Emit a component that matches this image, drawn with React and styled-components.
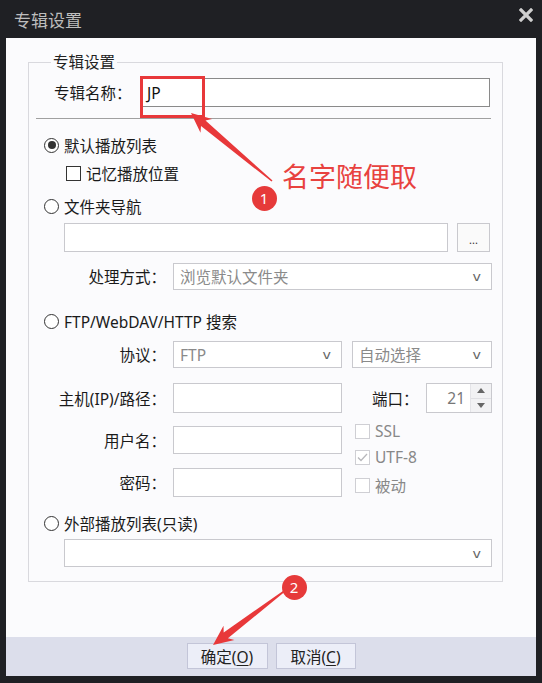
import React from "react";
import styled, { createGlobalStyle } from "styled-components";

const GlobalStyle = createGlobalStyle`
  html, body {
    margin: 0;
    padding: 0;
    background: #1f2024;
  }
  body {
    font-family: "Noto Sans", "Noto Sans CJK SC", sans-serif;
  }
`;

const Window = styled.div`
  position: relative;
  width: 542px;
  height: 683px;
  background: #1f2024;
  display: flex;
  flex-direction: column;
  overflow: hidden;
`;

const TitleBar = styled.div`
  height: 38px;
  flex: none;
  display: flex;
  align-items: center;
  justify-content: space-between;
  padding: 0 9px 0 14px;
  color: #bdbdbd;
  font-size: 17px;
`;

const CloseButton = styled.div`
  width: 14px;
  height: 14px;
  margin-top: -8px;
  display: flex;
`;

const Body = styled.div`
  flex: 1;
  margin: 0 6px 7px;
  display: flex;
  flex-direction: column;
  background: #fbfbfd;
`;

const Content = styled.div`
  flex: 1;
  padding: 14px 33px 0 22px;
`;

const GroupBox = styled.fieldset`
  margin: 0;
  padding: 0 10px 14px 15px;
  border: 1px solid #d9d9de;
  min-width: 0;
`;

const Legend = styled.legend`
  margin-left: 7px;
  padding: 0 2px;
  font-size: 15.5px;
  line-height: 20px;
  color: #222;
`;

const Row = styled.div`
  display: flex;
  align-items: center;
  height: ${({ h }) => h || 22}px;
  margin-top: ${({ mt }) => mt || 0}px;
  margin-left: ${({ ml }) => ml || 0}px;
  font-size: 15.5px;
  color: #1a1a1a;
`;

const Separator = styled.div`
  height: 1px;
  background: #a0a0a0;
  margin: 11px 1px 0 -8px;
`;

const Radio = styled.span`
  width: 15px;
  height: 15px;
  box-sizing: border-box;
  border: 1.4px solid #333;
  border-radius: 50%;
  margin-right: 5px;
  display: flex;
  align-items: center;
  justify-content: center;
  background: #fff;
  &::after {
    content: "";
    width: 8px;
    height: 8px;
    border-radius: 50%;
    background: ${({ checked }) => (checked ? "#333" : "transparent")};
  }
`;

const Check = styled.span`
  width: 15px;
  height: 15px;
  box-sizing: border-box;
  border: 1.3px solid ${({ disabled }) => (disabled ? "#cfcfd4" : "#333")};
  background: #fff;
  margin-right: 5px;
  display: flex;
  align-items: center;
  justify-content: center;
`;

const Label = styled.span`
  width: ${({ w }) => w || 122}px;
  flex: none;
  text-align: ${({ left }) => (left ? "left" : "right")};
  margin-right: ${({ gap }) => (gap === undefined ? 7 : gap)}px;
  white-space: nowrap;
  color: ${({ dim }) => (dim ? "#888" : "#1a1a1a")};
`;

const Field = styled.div`
  box-sizing: border-box;
  height: 100%;
  width: ${({ w }) => (w ? `${w}px` : "auto")};
  flex: ${({ w }) => (w ? "none" : 1)};
  margin-left: ${({ ml }) => ml || 0}px;
  border: 1px solid ${({ dark }) => (dark ? "#8a8a8a" : "#c9c9ce")};
  background: #fff;
  display: flex;
  align-items: center;
  padding: 0 6px;
  color: ${({ dark }) => (dark ? "#111" : "#8a8a8a")};
  font-size: 15.5px;
`;

const Chevron = styled.span`
  margin-left: auto;
  margin-right: 4px;
  font-size: 13px;
  color: #666;
  font-family: "DejaVu Sans", sans-serif;
  transform: scaleX(1.1);
`;

const DotsButton = styled.div`
  box-sizing: border-box;
  width: 33px;
  height: 100%;
  margin-left: 9px;
  margin-right: 2px;
  border: 1px solid #c9c9ce;
  background: #fafafa;
  display: flex;
  align-items: center;
  justify-content: center;
  font-size: 11px;
  color: #333;
  padding-top: 4px;
`;

const PortLabel = styled.span`
  margin-left: 30px;
  white-space: nowrap;
`;

const Spin = styled.div`
  box-sizing: border-box;
  width: 66px;
  height: 100%;
  margin-left: auto;
  border: 1px solid #c9c9ce;
  background: #fff;
  display: flex;
  align-items: center;
`;

const SpinValue = styled.span`
  flex: 1;
  text-align: right;
  padding-right: 5px;
  color: #777;
  font-size: 15.5px;
`;

const SpinButtons = styled.div`
  width: 20px;
  height: 100%;
  display: flex;
  flex-direction: column;
  border-left: 1px solid #e4e4e8;
`;

const SpinHalf = styled.div`
  flex: 1;
  background: #f2f2f4;
  display: flex;
  align-items: center;
  justify-content: center;
  border-bottom: ${({ top }) => (top ? "1px solid #e0e0e4" : "none")};
`;

const Split = styled.div`
  display: flex;
  margin-top: 13px;
`;

const Column = styled.div`
  display: flex;
  flex-direction: column;
  width: ${({ w }) => (w ? `${w}px` : "auto")};
  margin-left: ${({ ml }) => ml || 0}px;
  margin-top: ${({ mt }) => mt || 0}px;
`;

const Footer = styled.div`
  height: 39px;
  flex: none;
  background: #dcdeeb;
  display: flex;
  justify-content: center;
  align-items: center;
  gap: 8px;
  padding-bottom: 4px;
  box-sizing: border-box;
`;

const Button = styled.button`
  width: ${({ w }) => w}px;
  height: 26px;
  margin-top: 3px;
  border: 1px solid #c3c5d8;
  background: #eceef8;
  font-family: inherit;
  font-size: 15.5px;
  color: #222;
  padding: 0;
  u {
    text-underline-offset: 2px;
  }
`;

const Overlay = styled.svg`
  position: absolute;
  left: 0;
  top: 0;
  pointer-events: none;
`;

const Badge = styled.div`
  position: absolute;
  left: ${({ x }) => x - 12.5}px;
  top: ${({ y }) => y - 12.5}px;
  width: 25px;
  height: 25px;
  border-radius: 50%;
  background: #e63a3a;
  color: #fff;
  font-size: 15px;
  display: flex;
  align-items: center;
  justify-content: center;
  font-family: "Noto Sans", sans-serif;
`;

const Note = styled.div`
  position: absolute;
  left: 282px;
  top: 160px;
  font-size: 27px;
  line-height: 34px;
  color: #e8423f;
  letter-spacing: 0px;
`;

const Arrow = ({ size }) => (
  <svg width="8" height="5" viewBox="0 0 8 5">
    <path d={size === "up" ? "M0 5 L4 0 L8 5 Z" : "M0 0 L4 5 L8 0 Z"} fill="#666" />
  </svg>
);

const Tick = () => (
  <svg width="11" height="9" viewBox="0 0 11 9">
    <path d="M1 4.5 L4 7.5 L10 1" stroke="#b8b8bc" strokeWidth="1.3" fill="none" />
  </svg>
);

function App() {
  return (
    <>
      <GlobalStyle />
      <Window>
        <TitleBar>
          专辑设置
          <CloseButton>
            <svg width="14" height="14" viewBox="0 0 14 14">
              <path d="M2 2 L12 12 M12 2 L2 12" stroke="#cfcfcf" strokeWidth="3.2" strokeLinecap="square" />
            </svg>
          </CloseButton>
        </TitleBar>
        <Body>
          <Content>
            <GroupBox>
              <Legend>专辑设置</Legend>
              <Row h={29} mt={6} ml={10}>
                <Label w={76} gap={10} left>专辑名称：</Label>
                <Field dark ml={0} style={{ marginRight: 2 }}>JP</Field>
              </Row>
              <Separator />
              <Row mt={15}>
                <Radio checked />
                默认播放列表
              </Row>
              <Row mt={6} ml={22}>
                <Check />
                记忆播放位置
              </Row>
              <Row mt={11}>
                <Radio />
                文件夹导航
              </Row>
              <Row h={29} mt={6} ml={20}>
                <Field />
                <DotsButton>...</DotsButton>
              </Row>
              <Row h={27} mt={11}>
                <Label>处理方式：</Label>
                <Field>
                  浏览默认文件夹
                  <Chevron>v</Chevron>
                </Field>
              </Row>
              <Row mt={20}>
                <Radio />
                FTP/WebDAV/HTTP 搜索
              </Row>
              <Row h={27} mt={9}>
                <Label>协议：</Label>
                <Field w={169}>
                  FTP
                  <Chevron>v</Chevron>
                </Field>
                <Field ml={10}>
                  自动选择
                  <Chevron>v</Chevron>
                </Field>
              </Row>
              <Row h={30} mt={15}>
                <Label>主机(IP)/路径：</Label>
                <Field w={169} />
                <PortLabel>端口：</PortLabel>
                <Spin>
                  <SpinValue>21</SpinValue>
                  <SpinButtons>
                    <SpinHalf top>
                      <Arrow size="up" />
                    </SpinHalf>
                    <SpinHalf>
                      <Arrow size="down" />
                    </SpinHalf>
                  </SpinButtons>
                </Spin>
              </Row>
              <Split>
                <Column>
                  <Row h={28}>
                    <Label>用户名：</Label>
                    <Field w={169} />
                  </Row>
                  <Row h={29} mt={14}>
                    <Label>密码：</Label>
                    <Field w={169} />
                  </Row>
                </Column>
                <Column ml={13} mt={-8}>
                  <Row h={26}>
                    <Check disabled />
                    <Label left dim w={60}>SSL</Label>
                  </Row>
                  <Row h={26} mt={0}>
                    <Check disabled>
                      <Tick />
                    </Check>
                    <Label left dim w={60}>UTF-8</Label>
                  </Row>
                  <Row h={26} mt={2}>
                    <Check disabled />
                    <Label left dim w={60}>被动</Label>
                  </Row>
                </Column>
              </Split>
              <Row mt={14}>
                <Radio />
                外部播放列表(只读)
              </Row>
              <Row h={28} mt={5} ml={20}>
                <Field>
                  <Chevron>v</Chevron>
                </Field>
              </Row>
            </GroupBox>
          </Content>
          <Footer>
            <Button w={81}>
              确定(<u>O</u>)
            </Button>
            <Button w={80}>
              取消(<u>C</u>)
            </Button>
          </Footer>
        </Body>

        <Overlay width="542" height="683" viewBox="0 0 542 683">
          <rect x="141.5" y="77.5" width="62" height="39" fill="none" stroke="#e8383a" strokeWidth="3" />
          <polygon
            points="191,113 212.1,119 205.5,120.6 272.5,180.4 271.5,181.6 201,126 200.5,132.8"
            fill="#e8383a"
          />
          <polygon
            points="213,645 234.4,640.1 227.9,638.2 287.5,589.6 286.5,588.4 223.7,632.6 223.5,625.7"
            fill="#e8383a"
          />
        </Overlay>
        <Note>名字随便取</Note>
        <Badge x={264} y={198}>1</Badge>
        <Badge x={294} y={587}>2</Badge>
      </Window>
    </>
  );
}

export default App;
